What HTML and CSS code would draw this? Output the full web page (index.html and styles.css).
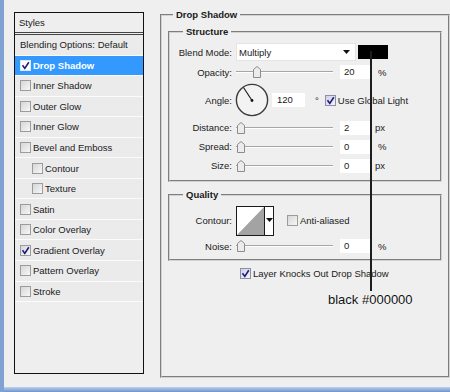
FILE: index.html
```html
<!DOCTYPE html>
<html lang="en">
<head>
    <meta charset="UTF-8">
    <title>Layer Style - Drop Shadow</title>
    <link rel="stylesheet" href="styles.css">
</head>
<body>
    <div class="window">
        <div class="dialog">
            <!-- left list of effects -->
            <div class="styles-list">
                <div class="list-head">Styles</div>
                <div class="list-item">Blending Options: Default</div>
                <div class="list-item selected"><span class="cb checked"><svg viewBox="0 0 9 9"><path d="M1.5 4.2 L3.8 7.4 L7.8 1.2"/></svg></span>Drop Shadow</div>
                <div class="list-item"><span class="cb"></span>Inner Shadow</div>
                <div class="list-item"><span class="cb"></span>Outer Glow</div>
                <div class="list-item"><span class="cb"></span>Inner Glow</div>
                <div class="list-item"><span class="cb"></span>Bevel and Emboss</div>
                <div class="list-item sub"><span class="cb"></span>Contour</div>
                <div class="list-item sub"><span class="cb"></span>Texture</div>
                <div class="list-item"><span class="cb"></span>Satin</div>
                <div class="list-item"><span class="cb"></span>Color Overlay</div>
                <div class="list-item"><span class="cb checked"><svg viewBox="0 0 9 9"><path d="M1.5 4.2 L3.8 7.4 L7.8 1.2"/></svg></span>Gradient Overlay</div>
                <div class="list-item"><span class="cb"></span>Pattern Overlay</div>
                <div class="list-item"><span class="cb"></span>Stroke</div>
            </div>

            <fieldset class="group outer">
                <legend>Drop Shadow</legend>

                <fieldset class="group inner structure">
                    <legend>Structure</legend>
                    <div class="row">
                        <span class="lbl">Blend Mode:</span>
                        <div class="select">Multiply<svg class="arrow" viewBox="0 0 7 4"><path d="M0 0 H7 L3.5 4 Z"/></svg></div>
                        <div class="swatch"></div>
                    </div>
                    <div class="row">
                        <span class="lbl">Opacity:</span>
                        <div class="slider"><svg class="thumb at-20" viewBox="0 0 8 12"><path d="M0.5 3.5 L4 0.5 L7.5 3.5 V11.5 H0.5 Z"/></svg></div>
                        <span class="num">20</span>
                        <span class="unit pct">%</span>
                    </div>
                    <div class="row tall">
                        <span class="lbl">Angle:</span>
                        <svg class="dial" viewBox="0 0 34 34">
                            <circle cx="17" cy="17" r="15.6"/>
                            <line x1="17" y1="17.5" x2="8.5" y2="4.5"/>
                            <circle class="dot" cx="17" cy="17.5" r="1.4"/>
                        </svg>
                        <span class="num wide">120</span>
                        <span class="unit deg">°</span>
                        <span class="cb checked light"><svg viewBox="0 0 9 9"><path d="M1.5 4.2 L3.8 7.4 L7.8 1.2"/></svg></span>
                        <span>Use Global Light</span>
                    </div>
                    <div class="row">
                        <span class="lbl">Distance:</span>
                        <div class="slider"><svg class="thumb" viewBox="0 0 8 12"><path d="M0.5 3.5 L4 0.5 L7.5 3.5 V11.5 H0.5 Z"/></svg></div>
                        <span class="num">2</span>
                        <span class="unit">px</span>
                    </div>
                    <div class="row">
                        <span class="lbl">Spread:</span>
                        <div class="slider"><svg class="thumb" viewBox="0 0 8 12"><path d="M0.5 3.5 L4 0.5 L7.5 3.5 V11.5 H0.5 Z"/></svg></div>
                        <span class="num">0</span>
                        <span class="unit pct">%</span>
                    </div>
                    <div class="row">
                        <span class="lbl">Size:</span>
                        <div class="slider"><svg class="thumb" viewBox="0 0 8 12"><path d="M0.5 3.5 L4 0.5 L7.5 3.5 V11.5 H0.5 Z"/></svg></div>
                        <span class="num">0</span>
                        <span class="unit">px</span>
                    </div>
                </fieldset>

                <fieldset class="group inner quality">
                    <legend>Quality</legend>
                    <div class="row contour-row">
                        <span class="lbl">Contour:</span>
                        <div class="contour">
                            <svg class="curve" viewBox="0 0 27 28"><path d="M0 28 L27 0 V28 Z"/></svg>
                            <div class="contour-arrow"><svg class="arrow" viewBox="0 0 7 4"><path d="M0 0 H7 L3.5 4 Z"/></svg></div>
                        </div>
                        <span class="cb anti"></span>
                        <span>Anti-aliased</span>
                    </div>
                    <div class="row noise-row">
                        <span class="lbl">Noise:</span>
                        <div class="slider"><svg class="thumb" viewBox="0 0 8 12"><path d="M0.5 3.5 L4 0.5 L7.5 3.5 V11.5 H0.5 Z"/></svg></div>
                        <span class="num">0</span>
                        <span class="unit pct">%</span>
                    </div>
                </fieldset>

                <div class="knockout">
                    <span class="cb checked light"><svg viewBox="0 0 9 9"><path d="M1.5 4.2 L3.8 7.4 L7.8 1.2"/></svg></span>
                    <span>Layer Knocks Out Drop Shadow</span>
                </div>
            </fieldset>
        </div>
        <div class="taskbar"></div>

        <!-- annotation drawn over the dialog -->
        <div class="callout-line"></div>
        <div class="callout">black #000000</div>
    </div>
</body>
</html>
```

FILE: styles.css
```css
* {
    margin: 0;
    padding: 0;
    box-sizing: border-box;
}

body {
    font-family: 'Liberation Sans', Arial, sans-serif;
    font-size: 9.5px;
    color: #1a1a1a;
    background-color: #efefef;
}

.window {
    position: relative;
    width: 450px;
    height: 392px;
    display: flex;
    flex-direction: column;
    border-left: 4px solid #7fa2d4;
    overflow: hidden;
}

.dialog {
    flex: 1;
    display: flex;
    align-items: flex-start;
}

.taskbar {
    height: 5px;
    background: linear-gradient(#bcd1ee, #6d94cc);
}

/* styles list */

.styles-list {
    width: 130px;
    height: 362px;
    margin: 12px 0 0 10px;
    border: 1px solid #111;
    background-color: #eeeeee;
}

.list-head {
    height: 22px;
    line-height: 19px;
    padding-left: 4px;
    border-bottom: 3px double #444;
}

.list-item {
    height: 20.55px;
    display: flex;
    align-items: center;
    padding-left: 5px;
    background-color: #ebebeb;
    border-bottom: 1px solid #fbfbfb;
}

.list-item.sub {
    padding-left: 17px;
}

.list-item.selected {
    background-color: #3399ff;
    color: white;
    font-weight: bold;
}

.cb {
    flex: none;
    width: 11px;
    height: 11px;
    margin-right: 2px;
    border: 1px solid #9c9c9c;
    background: linear-gradient(135deg, #d6d6d6, #f7f7f7);
    display: flex;
}

.cb svg {
    width: 9px;
    height: 9px;
}

.cb svg path {
    fill: none;
    stroke: #1c1c80;
    stroke-width: 1.6;
}

.selected .cb {
    background: white;
    border-color: #dfe9f5;
}

.cb.light {
    background: linear-gradient(135deg, #cfcfe6, #f4f4fb);
    border-color: #8e8ea6;
}

/* group boxes */

.group {
    border: 2px groove #d2d2d2;
    min-width: 0;
}

.group legend {
    padding: 0 3px;
    font-weight: bold;
    line-height: 12px;
}

.outer {
    width: 290px;
    height: 369px;
    margin: 9px 0 0 16px;
    padding: 5px 6px 0;
}

.outer > legend {
    margin-left: 5px;
}

.inner {
    padding: 4px 0 5px;
}

.inner > legend {
    margin-left: 13px;
}

.quality {
    margin-top: 7px;
    padding-bottom: 4px;
}

.row {
    display: flex;
    align-items: center;
    height: 19px;
}

.structure .row:nth-of-type(1),
.structure .row:nth-of-type(2) {
    height: 20px;
}

.row.tall {
    height: 36px;
}

.contour-row {
    height: 31px;
}

.noise-row {
    height: 18px;
    margin-top: 1px;
}

.lbl {
    flex: none;
    width: 62px;
    margin-right: 4px;
    text-align: right;
}

.select {
    width: 120px;
    height: 18px;
    padding: 0 5px 0 2px;
    background-color: white;
    border: 1px solid #e4e4e4;
    display: flex;
    align-items: center;
    justify-content: space-between;
}

.arrow {
    width: 7px;
    height: 4px;
}

.arrow path {
    fill: #111;
}

.swatch {
    width: 30px;
    height: 14px;
    margin-left: 2px;
    background-color: #000;
}

.slider {
    flex: none;
    width: 100px;
    height: 12px;
    display: flex;
    align-items: center;
    background: linear-gradient(transparent 5px, #a6a6a6 5px, #a6a6a6 6px, #ffffff 6px, #ffffff 7px, transparent 7px) no-repeat;
    background-size: 97px 100%;
}

.thumb {
    width: 8px;
    height: 12px;
    margin-left: 1px;
}

.thumb.at-20 {
    margin-left: 17px;
}

.thumb path {
    fill: #ececec;
    stroke: #8c8c8c;
    stroke-width: 1;
}

.num {
    width: 30px;
    height: 14px;
    line-height: 14px;
    margin-left: 4px;
    padding-left: 4px;
    background-color: white;
}

.num.wide {
    width: 33px;
    margin-left: 3px;
    padding-left: 5px;
}

.unit {
    margin-left: 5px;
}

.unit.pct {
    margin-left: 8px;
}

.unit.deg {
    margin-left: 10px;
    margin-right: 6px;
}

.dial {
    width: 34px;
    height: 34px;
    margin-left: -1px;
}

.dial circle {
    fill: #f3f3f3;
    stroke: #3a3a3a;
    stroke-width: 1.4;
}

.dial line {
    stroke: #222;
    stroke-width: 1.2;
}

.dial .dot {
    fill: #111;
    stroke: none;
}

.contour {
    width: 38px;
    height: 30px;
    display: flex;
    border: 1px solid #1a1a1a;
    background-color: white;
}

.curve {
    width: 27px;
    height: 28px;
}

.curve path {
    fill: #a3a3a3;
}

.contour-arrow {
    flex: 1;
    display: flex;
    align-items: flex-start;
    justify-content: center;
    padding-top: 11px;
    border-left: 1px solid #1a1a1a;
}

.cb.anti {
    margin-left: 13px;
}

.knockout {
    display: flex;
    align-items: center;
    height: 14px;
    margin-top: 5px;
    padding-left: 72px;
}

/* annotation */

.callout-line {
    position: absolute;
    left: 366px;
    top: 51px;
    width: 2px;
    height: 240px;
    background-color: #1e1e1e;
}

.callout {
    position: absolute;
    left: 324px;
    top: 292px;
    font-size: 13px;
    line-height: 16px;
    color: #111;
    text-shadow: 0 0 2px #fff;
}
```
